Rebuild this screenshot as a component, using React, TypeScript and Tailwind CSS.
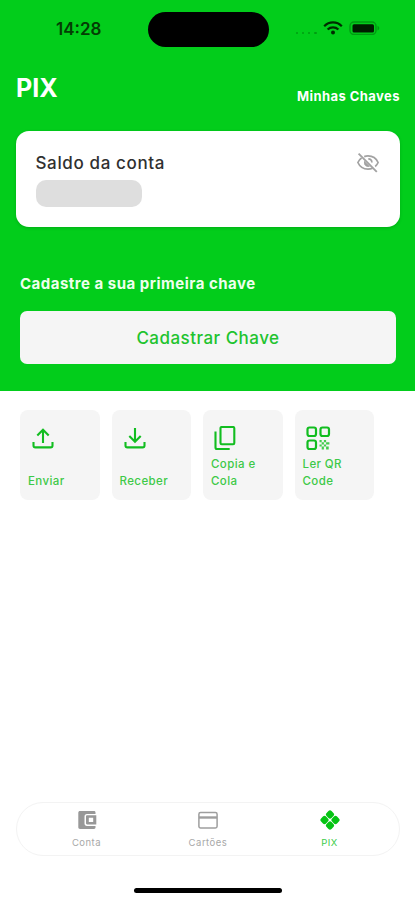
import type { ReactNode } from "react";

function StatusBar() {
  return (
    <div className="flex h-[47px] items-start text-[#043d04]">
      <span className="ml-[56px] mt-[19px] w-[91.500px] whitespace-nowrap text-[17px] font-semibold leading-5">14:28</span>
      <div className="mt-[11.500px] h-[35px] w-[121px] rounded-full bg-black" />
      <div className="ml-[27px] mt-[31.500px] flex gap-[3.600px]">
        {[0, 1, 2, 3].map((i) => (
          <i key={i} className="size-[2.600px] rounded-full bg-[#019c12]" />
        ))}
      </div>
      <svg className="ml-[6px] mt-[20.500px]" width="20" height="14" viewBox="0 0 20 14" fill="none" stroke="#002b00" strokeWidth="2.200">
        <path d="M1.200 5.200C6.200 .2 13.800 .2 18.800 5.200" />
        <path d="M4.600 8.500c3-2.900 7.800-2.900 10.800 0" />
        <circle cx="10" cy="11.600" r="2" fill="#002b00" stroke="none" />
      </svg>
      <svg className="ml-[6px] mt-[21px]" width="32" height="14" viewBox="0 0 32 14">
        <rect x="1" y="1" width="26" height="12.500" rx="4" fill="none" stroke="#019a12" strokeWidth="1.400" />
        <rect x="3.500" y="3.200" width="21.500" height="8.200" rx="1.500" fill="#001c00" />
        <path d="M28.500 4.800c2.300 1 2.300 3.800 0 4.800z" fill="#019a12" />
      </svg>
    </div>
  );
}

function EyeOff() {
  return (
    <svg width="24" height="24" viewBox="0 0 24 24" fill="none" stroke="#a2a2a2" strokeWidth="1.700">
      <path d="M8.200 5.600C9.400 5.100 10.600 4.900 12 4.900c4.500 0 8.300 2.500 10.100 6.600-.7 1.600-1.700 3-2.900 4" />
      <path d="M5.600 7C3.900 8.100 2.600 9.700 1.900 11.500c1.800 4.100 5.600 6.600 10.100 6.600 1.600 0 3.200-.3 4.600-.9" />
      <path d="M12.300 7.900c2 .1 3.500 1.600 3.600 3.600" />
      <path d="M8.200 9.800 14 15.500c-3.500 1.800-7-1.700-5.800-5.700z" fill="#a2a2a2" stroke="none" />
      <path d="M2.600 2.600 20.800 20.800" strokeWidth="1.900" />
    </svg>
  );
}

function Tray({ down = false }: { down?: boolean }) {
  return (
    <svg width="24" height="24" viewBox="0 0 24 24" fill="none" stroke="#12bd20" strokeWidth="2.100">
      <path d="M2.500 16v3.500c0 1.200.7 1.900 1.900 1.900h15.200c1.200 0 1.900-.7 1.900-1.900V16" />
      {down ? <path d="M12 2v14M6.300 10.100l5.700 5.700 5.700-5.700" /> : <path d="M12 17V4M6.300 9.500 12 3.800l5.700 5.700" />}
    </svg>
  );
}

function CopyIcon() {
  return (
    <svg width="24" height="26" viewBox="0 0 24 26" fill="none" stroke="#12bd20" strokeWidth="2.100">
      <rect x="6.500" y="1" width="13.800" height="17.200" rx="1.200" />
      <path d="M1.500 5.500v16c0 1 .5 1.500 1.500 1.500h12.700" />
    </svg>
  );
}

function QrIcon() {
  return (
    <svg width="25" height="25" viewBox="0 0 25 25" fill="none" stroke="#12bd20" strokeWidth="2.200">
      <rect x="1.500" y="1.500" width="8.500" height="8.500" rx="2" />
      <rect x="14.500" y="1.500" width="8.500" height="8.500" rx="2" />
      <rect x="1.500" y="14.500" width="8.500" height="8.500" rx="2" />
      <path d="M13.500 14h2.200v2.200h-2.200zM17.900 14h2.200v2.200h-2.200zM15.700 16.200h2.200v2.200h-2.200zM20.100 16.200h3.300v2.200h-3.300zM13.500 18.400h2.200v2.200h-2.200zM17.900 18.400h2.200v2.200h-2.200zM15.700 20.600h2.200v3h-2.200zM20.100 20.600h2.600v3h-2.600z" fill="#43cc4d" stroke="none" />
    </svg>
  );
}

function WalletIcon() {
  return (
    <svg width="20" height="20" viewBox="0 0 20 20">
      <path fill="#989898" fillRule="evenodd" d="M3 1h14c.9 0 1.500.6 1.500 1.400V4H10C8.400 4 7.500 5 7.500 6.500v7c0 1.500.9 2.500 2.500 2.500h8.500v1.600c0 .8-.6 1.400-1.500 1.400H3c-1 0-1.700-.7-1.700-1.700V2.700C1.300 1.700 2 1 3 1zM10.200 5.300h9.100v9.200h-9.100c-.7 0-1.200-.5-1.200-1.200V6.500c0-.7.500-1.200 1.200-1.200zM11.800 7.700v4.400h4.400V7.700z" />
    </svg>
  );
}

function CardIcon() {
  return (
    <svg width="20" height="20" viewBox="0 0 20 20" fill="none" stroke="#9e9e9e">
      <rect x=".9" y="2.500" width="18.200" height="15.500" rx="1.700" strokeWidth="1.500" />
      <path d="M1 7.500h18" strokeWidth="2.400" />
    </svg>
  );
}

function PixIcon() {
  return (
    <svg width="20" height="20" viewBox="0 0 20 20" fill="#06c414">
      <rect x="-3.500" y="-3.500" width="7" height="7" rx="2.200" transform="translate(10 4.500) rotate(45)" />
      <rect x="-3.500" y="-3.500" width="7" height="7" rx="2.200" transform="translate(4.500 10) rotate(45)" />
      <rect x="-3.500" y="-3.500" width="7" height="7" rx="2.200" transform="translate(15.500 10) rotate(45)" />
      <rect x="-3.500" y="-3.500" width="7" height="7" rx="2.200" transform="translate(10 15.500) rotate(45)" />
    </svg>
  );
}

function Action({ icon, children }: { icon: ReactNode; children: ReactNode }) {
  return (
    <button className="flex h-[90px] w-[79.500px] flex-col items-start justify-between rounded-lg bg-[#f5f5f5] pb-[11px] pl-2 pt-[15.500px] text-left text-[11.500px] font-medium leading-[16.500px] tracking-[0.400px] text-[#3dc947]">
      <span className="ml-[3px] h-[26px]">{icon}</span>
      <span className="whitespace-nowrap">{children}</span>
    </button>
  );
}

function Tab({ icon, label, active = false }: { icon: ReactNode; label: string; active?: boolean }) {
  return (
    <button className={`flex w-[121.500px] flex-col items-center text-[9.500px] leading-3 tracking-[0.500px] ${active ? "text-[#40cc4a]" : "text-[#a8a8a8]"}`}>
      {icon}
      <span className="mt-[7px]">{label}</span>
    </button>
  );
}

export default function App() {
  return (
    <div className="flex h-[900px] w-[415px] flex-col bg-white font-['Inter',sans-serif]">
      <header className="h-[391px] bg-[#02cd1b]">
        <StatusBar />
        <div className="flex h-[83.500px] items-start justify-between pl-4 pr-[15px] text-white">
          <h1 className="mt-[25.500px] text-[25px] font-bold leading-[30px]">PIX</h1>
          <span className="mt-[41px] whitespace-nowrap text-[13px] font-bold leading-4 tracking-[0.430px]">Minhas Chaves</span>
        </div>
        <section className="ml-[15.500px] flex h-[96px] w-[384.500px] justify-between rounded-[13px] bg-white pl-[20px] pr-[20px] shadow-[0_1px_3px_rgba(0,80,0,0.250)]">
          <div>
            <p className="mt-[21px] whitespace-nowrap text-[17px] font-medium leading-[22px] tracking-[0.630px] text-[#303030]">Saldo da conta</p>
            <div className="mt-[6.500px] h-[27px] w-[106px] rounded-[10px] bg-[#dedede]" />
          </div>
          <div className="mt-[20px]"><EyeOff /></div>
        </section>
        <p className="ml-5 mt-[47.500px] whitespace-nowrap text-[15px] font-bold leading-5 tracking-[0.500px] text-[#eeffed]">Cadastre a sua primeira chave</p>
        <button className="ml-[20px] mt-[17px] h-[53px] w-[376px] rounded-[7px] bg-[#f5f5f5] pt-[2px] text-[17px] font-medium tracking-[0.480px] text-[#21c32e]">Cadastrar Chave</button>
      </header>
      <div className="flex gap-[12px] pl-5 pt-[19px]">
        <Action icon={<Tray />}>Enviar</Action>
        <Action icon={<Tray down />}>Receber</Action>
        <Action icon={<CopyIcon />}>Copia e<br />Cola</Action>
        <Action icon={<QrIcon />}>Ler QR<br />Code</Action>
      </div>
      <nav className="ml-[16px] mt-auto flex h-[53.500px] w-[384px] justify-center rounded-full border border-[#f3f3f3] pt-[7px]">
        <Tab icon={<WalletIcon />} label="Conta" />
        <Tab icon={<CardIcon />} label="Cartões" />
        <Tab icon={<PixIcon />} label="PIX" active />
      </nav>
      <div className="mb-[7px] ml-[134px] mt-[32.500px] h-[5px] w-[148px] shrink-0 rounded-full bg-black" />
    </div>
  );
}
